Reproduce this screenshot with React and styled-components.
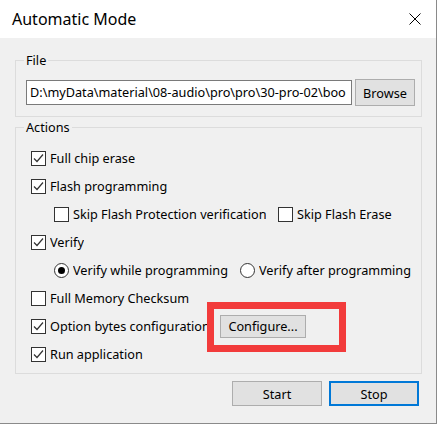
import React from 'react';
import styled, { createGlobalStyle } from 'styled-components';

const Global = createGlobalStyle`
  html, body {
    margin: 0;
    padding: 0;
    background: #f0f0f0;
  }
  * {
    box-sizing: border-box;
  }
`;

const Window = styled.div`
  position: relative;
  width: 437px;
  height: 424px;
  background: #f0f0f0;
  border-right: 1px solid #8a8a8a;
  border-bottom: 1px solid #8a8a8a;
  font-family: "Noto Sans", "Open Sans", sans-serif;
  font-size: 12.7px;
  color: #000;
  overflow: hidden;
`;

const TitleBar = styled.div`
  display: flex;
  align-items: center;
  justify-content: space-between;
  height: 38px;
  padding: 0 15px 0 12px;
  background: #fff;
`;

const Title = styled.div`
  font-size: 16px;
  line-height: 20px;
`;

const CloseIcon = styled.svg`
  width: 12px;
  height: 12px;
  display: block;
`;

const Body = styled.div`
  padding: 15px 14px 0 15px;
`;

const Group = styled.fieldset`
  margin: ${p => p.$top || 0}px 0 0 0;
  padding: ${p => p.$pad} 8px;
  border: 1px solid #dcdcdc;
  min-inline-size: 0;
`;

const Legend = styled.legend`
  margin: 0;
  padding: 0 2px;
  line-height: 15px;
`;

const Content = styled.div`
  padding-left: ${p => p.$indent}px;
`;

const FileRow = styled.div`
  display: flex;
  align-items: center;
  gap: 3px;
`;

const PathInput = styled.div`
  width: 326px;
  height: 25px;
  padding: 0 3px;
  background: #fff;
  border: 1px solid #7a7a7a;
  line-height: 23px;
  white-space: nowrap;
  overflow: hidden;
`;

const Button = styled.div`
  display: flex;
  align-items: center;
  justify-content: center;
  width: ${p => p.$w}px;
  height: ${p => p.$h}px;
  background: #e1e1e1;
  border: ${p => (p.$focus ? '2px solid #0078d7' : '1px solid #adadad')};
  white-space: nowrap;
`;

const Row = styled.div`
  display: flex;
  align-items: center;
  height: 28px;
  padding-left: ${p => p.$indent || 0}px;
`;

const Option = styled.div`
  display: flex;
  align-items: center;
  gap: 4px;
  width: ${p => (p.$w ? `${p.$w}px` : 'auto')};
  flex-shrink: 0;
`;

const Box = styled.div`
  width: 15px;
  height: 15px;
  flex-shrink: 0;
  background: #fff;
  border: 1px solid #333;
  display: flex;
  align-items: center;
  justify-content: center;
`;

const Radio = styled.div`
  width: 15px;
  height: 15px;
  flex-shrink: 0;
  border-radius: 50%;
  background: #fff;
  border: 1px solid #333;
  display: flex;
  align-items: center;
  justify-content: center;

  &::after {
    content: '';
    width: 7px;
    height: 7px;
    border-radius: 50%;
    background: ${p => (p.$on ? '#000' : 'transparent')};
  }
`;

const Label = styled.span`
  white-space: nowrap;
  overflow: hidden;
  width: ${p => (p.$w ? `${p.$w}px` : 'auto')};
`;

const Actions = styled.div`
  display: flex;
  justify-content: flex-end;
  gap: 7px;
  margin: 7px 3px 0 0;
`;

const Highlight = styled.div`
  position: absolute;
  left: 207px;
  top: 302px;
  width: 139px;
  height: 50px;
  border: 7px solid #f23b3b;
`;

const Check = ({ on }) => (
  <Box>
    {on && (
      <svg width="11" height="11" viewBox="0 0 11 11">
        <polyline points="1,5.5 4,8.5 10,1.5" fill="none" stroke="#333" strokeWidth="1.2" />
      </svg>
    )}
  </Box>
);

const CheckOption = ({ on, label, w, lw }) => (
  <Option $w={w}>
    <Check on={on} />
    <Label $w={lw}>{label}</Label>
  </Option>
);

const RadioOption = ({ on, label, w }) => (
  <Option $w={w}>
    <Radio $on={on} />
    <Label>{label}</Label>
  </Option>
);

export default function App() {
  return (
    <Window>
      <Global />
      <TitleBar>
        <Title>Automatic Mode</Title>
        <CloseIcon viewBox="0 0 12 12">
          <path d="M0.5 0.5 L11.5 11.5 M11.5 0.5 L0.5 11.5" stroke="#000" strokeWidth="1" />
        </CloseIcon>
      </TitleBar>
      <Body>
        <Group $pad="11px 6px 10px">
          <Legend>File</Legend>
          <Content $indent={2}>
            <FileRow>
              <PathInput>D:\myData\material\08-audio\pro\pro\30-pro-02\boo</PathInput>
              <Button $w={60} $h={27}>Browse</Button>
            </FileRow>
          </Content>
        </Group>
        <Group $top={3} $pad="9px 6px 5px">
          <Legend>Actions</Legend>
          <Content $indent={7}>
            <Row>
              <CheckOption on label="Full chip erase" />
            </Row>
            <Row>
              <CheckOption on label="Flash programming" />
            </Row>
            <Row $indent={23}>
              <CheckOption w={224} label="Skip Flash Protection verification" />
              <CheckOption label="Skip Flash Erase" />
            </Row>
            <Row>
              <CheckOption on label="Verify" />
            </Row>
            <Row $indent={23}>
              <RadioOption on w={186} label="Verify while programming" />
              <RadioOption label="Verify after programming" />
            </Row>
            <Row>
              <CheckOption label="Full Memory Checksum" />
            </Row>
            <Row>
              <CheckOption on lw={157} label="Option bytes configuration" />
              <Button $w={86} $h={23} style={{ marginLeft: 13 }}>Configure...</Button>
            </Row>
            <Row>
              <CheckOption on label="Run application" />
            </Row>
          </Content>
        </Group>
        <Actions>
          <Button $w={90} $h={25}>Start</Button>
          <Button $w={90} $h={25} $focus>Stop</Button>
        </Actions>
      </Body>
      <Highlight />
    </Window>
  );
}
